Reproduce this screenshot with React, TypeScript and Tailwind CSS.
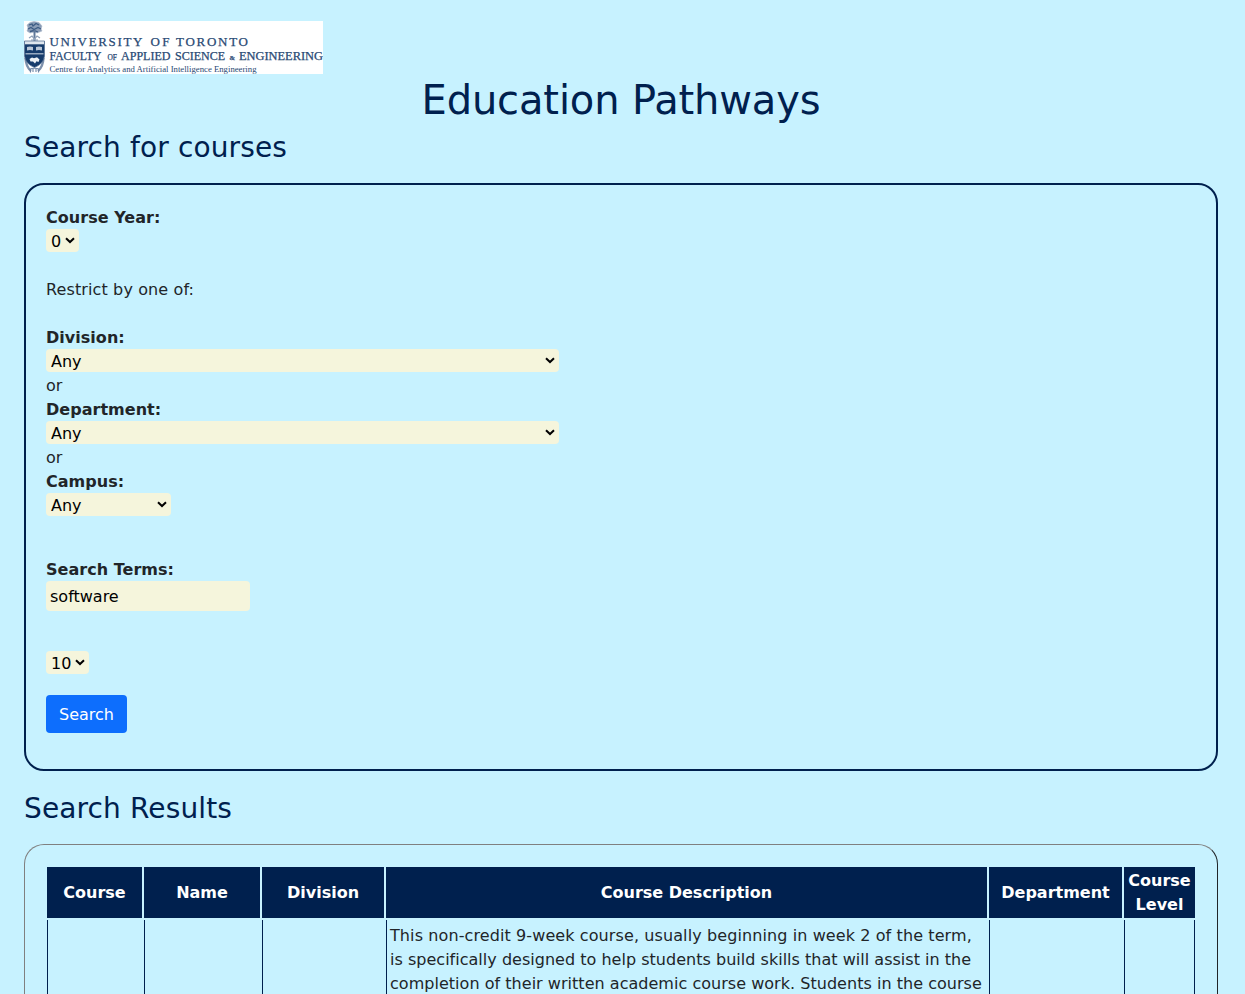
import React from 'react';

function Chevron() {
  return (
    <svg className="pointer-events-none absolute right-[4px] top-[8px]" width="10" height="7" viewBox="0 0 10 7" fill="none">
      <path d="M1 1.2 L5 5 L9 1.2" stroke="#000" strokeWidth="2" />
    </svg>
  );
}

function Select({ value, className }: { value: string; className: string }) {
  return (
    <div className={`relative h-[23px] ${className}`}>
      <select defaultValue={value} className="block h-[23px] w-full appearance-none rounded-[4px] bg-[#f5f5dc] pl-[5px] pt-[2px] text-[16px] leading-[21px] text-black outline-none">
        <option>{value}</option>
      </select>
      <Chevron />
    </div>
  );
}

function Label({ children }: { children: React.ReactNode }) {
  return <div className="h-[24px] font-bold leading-[26px] tracking-[0.03px]">{children}</div>;
}

function Logo() {
  return (
    <svg className="block h-[53px] w-[299px]" viewBox="0 0 299 53" role="img" aria-label="University of Toronto">
      <rect width="299" height="53" fill="#fff" />
      <path d="M3 4 L6 1.5 L10 .5 L15 1.5 L18 5 L17 8 L18 10 L13 12 L10.5 11 L6 12 L3 10 L4 7Z" fill="#8b9db7" stroke="#a9b7ca" strokeWidth=".6" />
      <path d="M5 4 L8 3 L9 5 L12 2.5 L15 4 M4 8 L7 6.5 L10 8.5 L14 6.5 L17 8 M6 10.5 L10 9.5 L14 11" stroke="#3c5b84" strokeWidth="1.3" fill="none" />
      <path d="M10.5 9 V20" stroke="#5d7698" strokeWidth="2" />
      <path d="M5 17 L8 15 L10.5 18 L13 15 L16 17 M7 19 H14" stroke="#8fa1b9" strokeWidth="1.2" fill="none" />
      <path d="M1.5 37 Q2 46 7 50 M19.5 37 Q19 46 14 50" stroke="#7d91ad" strokeWidth="2.4" fill="none" />
      <path d="M.5 20 H20.5 V35 Q19.5 43 10.5 46.5 Q1.5 43 .5 35Z" fill="#173c6c" stroke="#5d7698" strokeWidth=".8" />
      <path d="M1 20.3 H20 V23.3 H1Z" fill="#dfe6ee" />
      <path d="M3 26 L6 25.5 L9 26 V29.5 L6 29 L3 29.5Z M12 26 L15 25.5 L18 26 V29.5 L15 29 L12 29.5Z" fill="#b9c6d6" />
      <path d="M1.5 32.8 H19.5" stroke="#b9c6d6" strokeWidth="1.2" />
      <path d="M5.5 38 L8 36.5 L10 37.3 L13 36.3 L15.5 38.5 L14.5 41 L12.5 40.3 L11 42.5 L9 40.5 L6.5 40.5Z" fill="#eef2f6" />
      <path d="M5 48.5 Q10.5 46 16 48.5 M6.5 48 V51.5 M9 47.5 V51 M12 47.5 V51 M14.5 48 V51.5" fill="none" stroke="#6f86a5" strokeWidth="1.1" />
      <g fill="#284974" stroke="#284974" strokeWidth=".25" fontFamily="'Liberation Serif', serif">
        <text x="25.5" y="25.4" fontSize="13" textLength="93" lengthAdjust="spacing">UNIVERSITY</text>
        <text x="126.5" y="25.4" fontSize="13" textLength="19" lengthAdjust="spacing">OF</text>
        <text x="152" y="25.4" fontSize="13" textLength="72" lengthAdjust="spacing">TORONTO</text>
        <text x="25.5" y="38.6" fontSize="11.5" textLength="52" lengthAdjust="spacingAndGlyphs">FACULTY</text>
        <text x="83.5" y="38.6" fontSize="7.5" textLength="9.5" lengthAdjust="spacingAndGlyphs">OF</text>
        <text x="97" y="38.6" fontSize="11.5" textLength="49.5" lengthAdjust="spacingAndGlyphs">APPLIED</text>
        <text x="151" y="38.6" fontSize="11.5" textLength="50" lengthAdjust="spacingAndGlyphs">SCIENCE</text>
        <text x="205.5" y="38.6" fontSize="7">&amp;</text>
        <text x="215" y="38.6" fontSize="11.5" textLength="84" lengthAdjust="spacingAndGlyphs">ENGINEERING</text>
        <text x="25.5" y="51" fontSize="9" strokeWidth="0" textLength="207" lengthAdjust="spacingAndGlyphs">Centre for Analytics and Artificial Intelligence Engineering</text>
      </g>
    </svg>
  );
}

const headers = ['Course', 'Name', 'Division', 'Course Description', 'Department', 'Course Level'];

export default function App() {
  return (
    <div className="h-[994px] overflow-hidden bg-[#c7f2ff] pl-[24px] pr-[27px] pt-[21px] font-['Verdana','DejaVu_Sans',sans-serif] text-[16px] leading-[24px] text-[#212529]">
      <Logo />
      <h1 className="mt-[2px] text-center text-[40px] leading-[48px] tracking-[-0.14px] text-[#00204e]">Education Pathways</h1>
      <h2 className="mt-[7px] text-[28px] leading-[34px] tracking-[0.13px] text-[#00204e]">Search for courses</h2>
      <form className="mt-[18px] h-[588px] rounded-[20px] border-2 border-[#00204e] p-[20px]">
        <Label>Course Year:</Label>
        <Select value="0" className="w-[33px]" />
        <div className="mb-[24px] mt-[25px] h-[24px] leading-[26px] tracking-[0.12px]">Restrict by one of:</div>
        <Label>Division:</Label>
        <Select value="Any" className="w-[513px]" />
        <div className="mt-px h-[24px] leading-[26px]">or</div>
        <Label>Department:</Label>
        <Select value="Any" className="w-[513px]" />
        <div className="mt-px h-[24px] leading-[26px]">or</div>
        <Label>Campus:</Label>
        <Select value="Any" className="w-[125px]" />
        <div className="mt-[41px]"><Label>Search Terms:</Label></div>
        <input defaultValue="software" className="block h-[30px] w-[204px] rounded-[4px] bg-[#f5f5dc] px-[4px] text-[16px] text-black outline-none" />
        <Select value="10" className="mt-[40px] w-[43px]" />
        <button type="button" className="mt-[21px] block h-[38px] w-[81px] rounded-[4px] bg-[#0d6efd] pt-[2px] text-white">Search</button>
      </form>
      <h2 className="mt-[21px] text-[28px] leading-[34px] tracking-[0.13px] text-[#00204e]">Search Results</h2>
      <div className="mt-[18px] h-[300px] rounded-[20px] border border-b-[#212529] border-l-[#808080] border-r-[#212529] border-t-[#808080] pl-[22px] pt-[22px]">
        <div className="grid w-[1148px] grid-cols-[95px_116px_122px_601px_133px_71px] gap-[2px]">
          {headers.map((h) => (
            <div key={h} className="flex h-[51px] items-center justify-center bg-[#00204e] text-center font-bold text-white">{h}</div>
          ))}
          <div className="h-[200px] border-l border-[#00204e]" />
          <div className="h-[200px] border-l border-[#00204e]" />
          <div className="h-[200px] border-l border-[#00204e]" />
          <div className="h-[200px] border-l border-[#00204e] pl-[3px] pt-[4px]">
            <p className="whitespace-nowrap tracking-[0.1px]">This non-credit 9-week course, usually beginning in week 2 of the term,</p>
            <p className="whitespace-nowrap tracking-[0.02px]">is specifically designed to help students build skills that will assist in the</p>
            <p className="whitespace-nowrap tracking-[0.03px]">completion of their written academic course work. Students in the course</p>
          </div>
          <div className="h-[200px] border-l border-[#00204e]" />
          <div className="h-[200px] border-x border-[#00204e]" />
        </div>
      </div>
    </div>
  );
}
